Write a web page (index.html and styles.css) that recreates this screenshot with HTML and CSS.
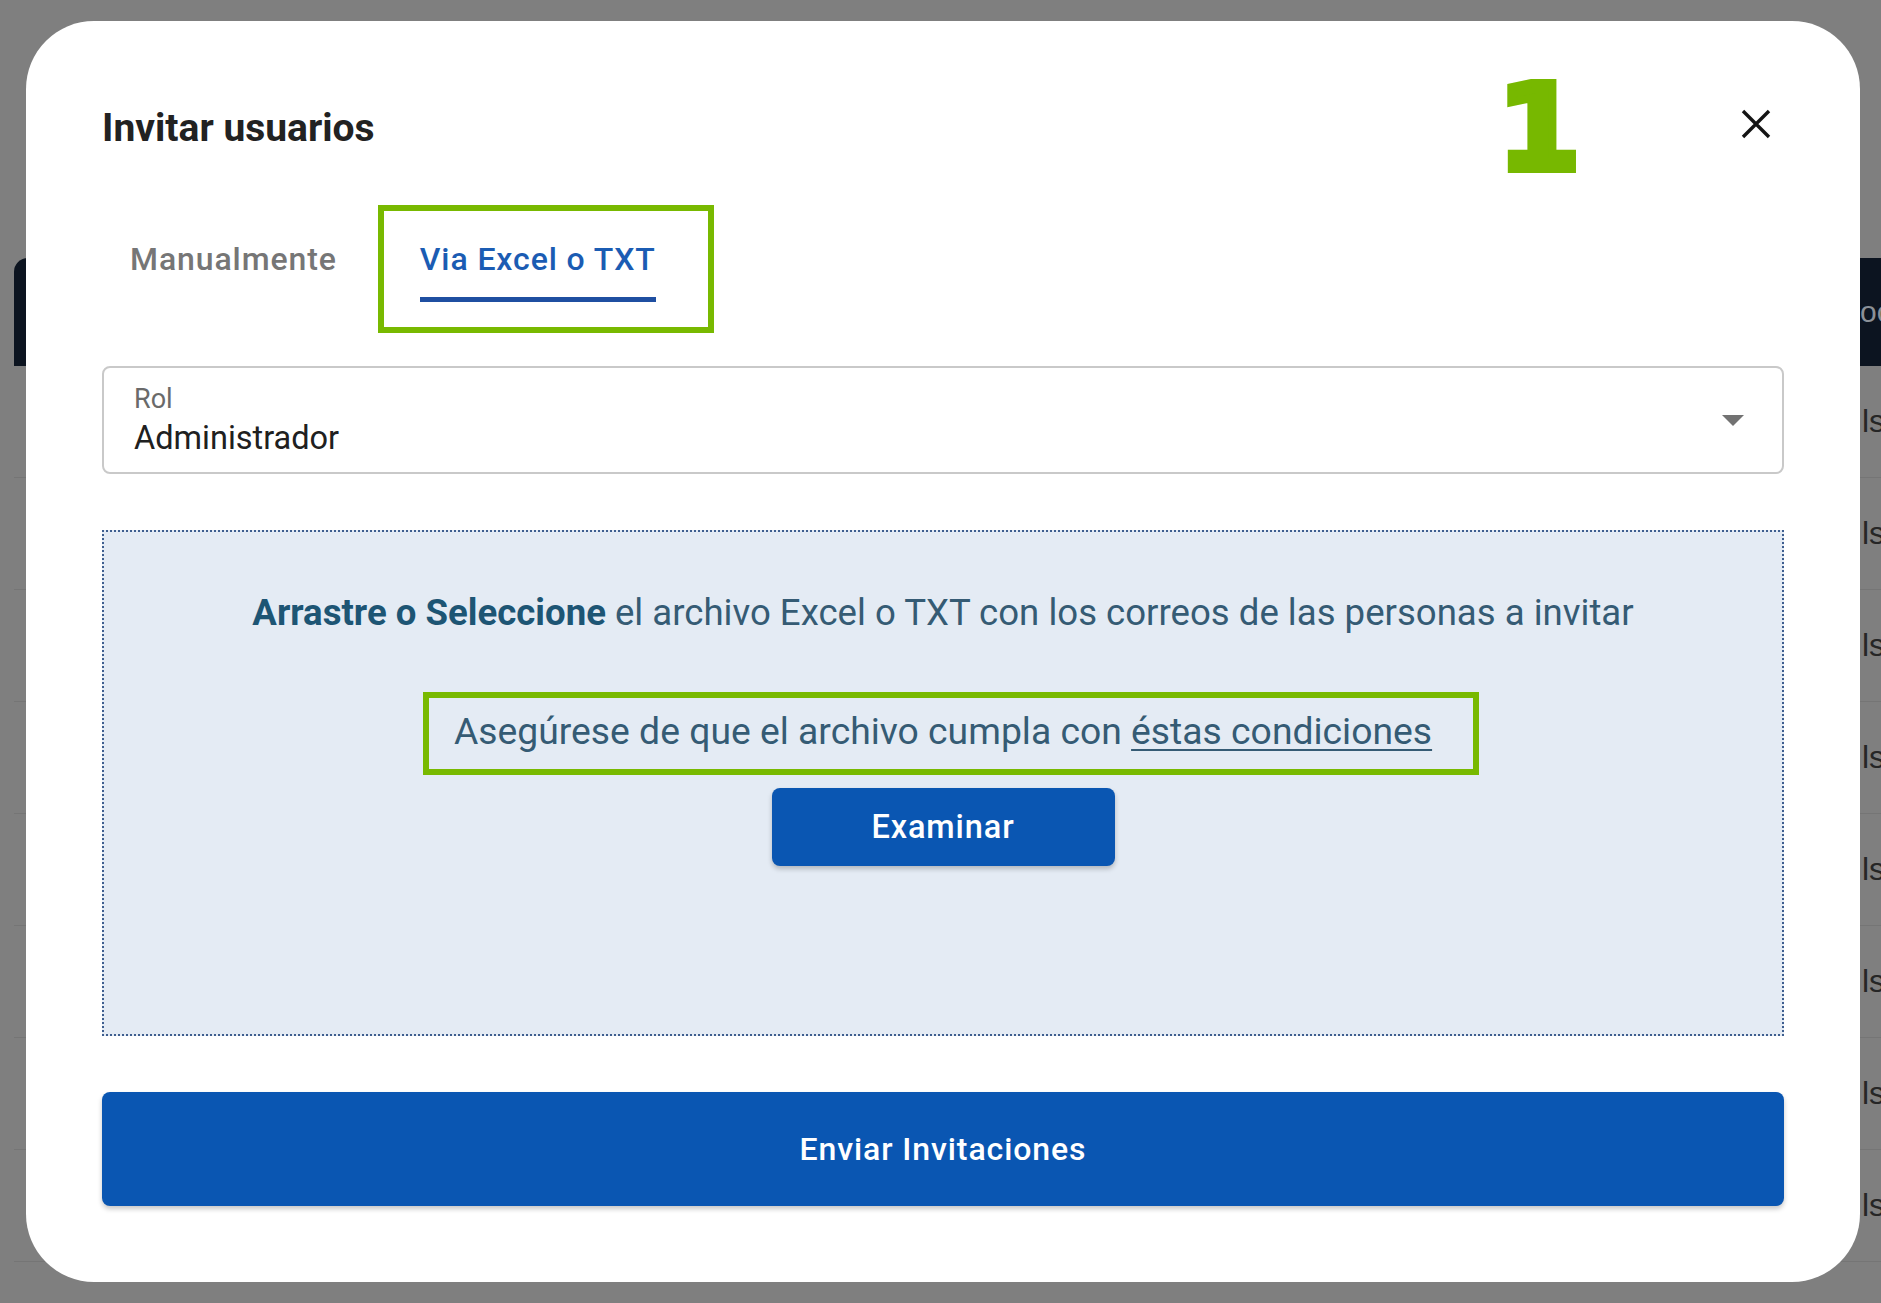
FILE: index.html
```html
<!DOCTYPE html>
<html lang="es">
<head>
<meta charset="utf-8">
<title>Invitar usuarios</title>
<link rel="stylesheet" href="styles.css">
</head>
<body>
<div class="app">
  <div class="table">
    <div class="thead"><span>oc</span></div>
    <div class="row"><span>ls</span></div>
    <div class="row"><span>ls</span></div>
    <div class="row"><span>ls</span></div>
    <div class="row"><span>ls</span></div>
    <div class="row"><span>ls</span></div>
    <div class="row"><span>ls</span></div>
    <div class="row"><span>ls</span></div>
    <div class="row"><span>ls</span></div>
    <div class="row"><span>ls</span></div>
  </div>
</div>
<div class="backdrop">
  <div class="modal" role="dialog">
    <header class="modal-head">
      <h2 class="title">Invitar usuarios</h2>
      <span class="step">1</span>
      <button class="close" aria-label="Cerrar">
        <svg width="32" height="32" viewBox="0 0 32 32"><path d="M3 3 L29 29 M29 3 L3 29" stroke="#141414" stroke-width="3.4" stroke-linecap="butt" fill="none"/></svg>
      </button>
    </header>
    <nav class="tabs">
      <span class="tab">Manualmente</span>
      <span class="tab active mark">Via Excel o TXT</span>
    </nav>
    <div class="select">
      <div class="select-text">
        <span class="select-label">Rol</span>
        <span class="select-value">Administrador</span>
      </div>
      <span class="caret"></span>
    </div>
    <div class="dropzone">
      <p class="drop-main"><strong>Arrastre o Seleccione</strong> el archivo Excel o TXT con los correos de las personas a invitar</p>
      <p class="drop-note"><span class="mark">Asegúrese de que el archivo cumpla con <a class="link">éstas condiciones</a></span></p>
      <button class="btn btn-browse">Examinar</button>
    </div>
    <button class="btn btn-send">Enviar Invitaciones</button>
  </div>
</div>
</body>
</html>
```
FILE: styles.css
```css
html, body {
  margin: 0;
  height: 100%;
}
body {
  background: #7f7f7f;
  overflow: hidden;
  font-family: Roboto, "Noto Sans", sans-serif;
}

/* dimmed page behind the dialog */
.app {
  height: 100%;
  box-sizing: border-box;
  overflow: hidden;
  padding-top: 258px;
  padding-left: 14px;
}
.table {
  width: 1867px;
}
.thead {
  height: 108px;
  box-sizing: border-box;
  background: #0c1420;
  border-top-left-radius: 14px;
  display: flex;
  align-items: center;
  padding-left: 1846px;
  color: #8b9097;
  font: 30px "Liberation Sans", Arial, sans-serif;
  white-space: nowrap;
  overflow: hidden;
}
.row {
  height: 112px;
  box-sizing: border-box;
  border-bottom: 1px solid #757575;
  display: flex;
  align-items: center;
  padding-left: 1848px;
  color: #262626;
  font: 32px "Liberation Sans", Arial, sans-serif;
  white-space: nowrap;
  overflow: hidden;
}

/* dialog */
.backdrop {
  position: fixed;
  inset: 0;
  display: flex;
  padding: 21px 21px 21px 26px;
}
.modal {
  flex: 1;
  background: #fff;
  border-radius: 68px;
  padding: 85px 76px 76px;
  display: flex;
  flex-direction: column;
}
.modal-head {
  position: relative;
  display: flex;
  align-items: center;
  justify-content: space-between;
  height: 44px;
}
.title {
  margin: 0;
  font-size: 39px;
  line-height: 44px;
  font-weight: 700;
  color: #222;
}
.step {
  position: absolute;
  left: 1396px;
  top: -37px;
  font: bold 118px/1 "DejaVu Sans", sans-serif;
  color: #77b800;
  -webkit-text-stroke: 8px #77b800;
}
.close {
  width: 56px;
  height: 56px;
  margin-top: -8px;
  border: 0;
  padding: 0;
  background: none;
  display: flex;
  align-items: center;
  justify-content: center;
}

.tabs {
  margin-top: 90px;
  display: flex;
  gap: 83px;
  padding-left: 28px;
}
.tab {
  font-size: 32px;
  line-height: 38px;
  font-weight: 500;
  letter-spacing: 0.9px;
  color: #767676;
  padding-bottom: 24px;
}
.tab.active {
  position: relative;
  color: #1b5cb3;
  padding-bottom: 19px;
  border-bottom: 5px solid #1f4fa1;
}
.mark::after {
  content: "";
  position: absolute;
  border: 6px solid #78b900;
  pointer-events: none;
}
.tab.mark::after {
  top: -35px;
  bottom: -36px;
  left: -42px;
  right: -58px;
}

.select {
  margin-top: 64px;
  height: 108px;
  box-sizing: border-box;
  border: 2px solid #c9c9c9;
  border-radius: 8px;
  display: flex;
  align-items: center;
  padding: 0 38px 0 30px;
}
.select-text {
  display: flex;
  flex-direction: column;
}
.select-label {
  font-size: 27px;
  line-height: 30px;
  color: #6a6a6a;
}
.select-value {
  margin-top: 5px;
  font-size: 32.5px;
  line-height: 38px;
  color: #202020;
}
.caret {
  margin-left: auto;
  width: 0;
  height: 0;
  border-left: 11px solid transparent;
  border-right: 11px solid transparent;
  border-top: 11px solid #727272;
}

.dropzone {
  margin-top: 56px;
  height: 506px;
  box-sizing: border-box;
  background: #e4ebf4;
  border: 2px dotted #3e5e8f;
  display: flex;
  flex-direction: column;
  align-items: center;
  padding-top: 59px;
  color: #355b74;
}
.drop-main {
  margin: 0;
  font-size: 36.6px;
  line-height: 44px;
}
.drop-main strong {
  font-weight: 700;
  color: #1d5574;
}
.drop-note {
  margin: 74px 0 0;
  font-size: 37.3px;
  line-height: 44px;
}
.drop-note .mark {
  position: relative;
  display: inline-block;
}
.drop-note .mark::after {
  top: -17px;
  bottom: -22px;
  left: -31px;
  right: -47px;
}
.link {
  color: inherit;
  text-decoration: underline;
  text-underline-offset: 5px;
  text-decoration-thickness: 2px;
}

.btn {
  border: 0;
  border-radius: 8px;
  background: #0a56b2;
  color: #fff;
  font-family: Roboto, "Noto Sans", sans-serif;
  font-weight: 500;
  letter-spacing: 0.9px;
  box-shadow: 0 3px 5px rgba(0, 0, 0, 0.22);
}
.btn-browse {
  margin-top: 35px;
  width: 343px;
  height: 78px;
  font-size: 32.5px;
}
.btn-send {
  margin-top: 56px;
  height: 114px;
  width: 100%;
  font-size: 32px;
}
```
